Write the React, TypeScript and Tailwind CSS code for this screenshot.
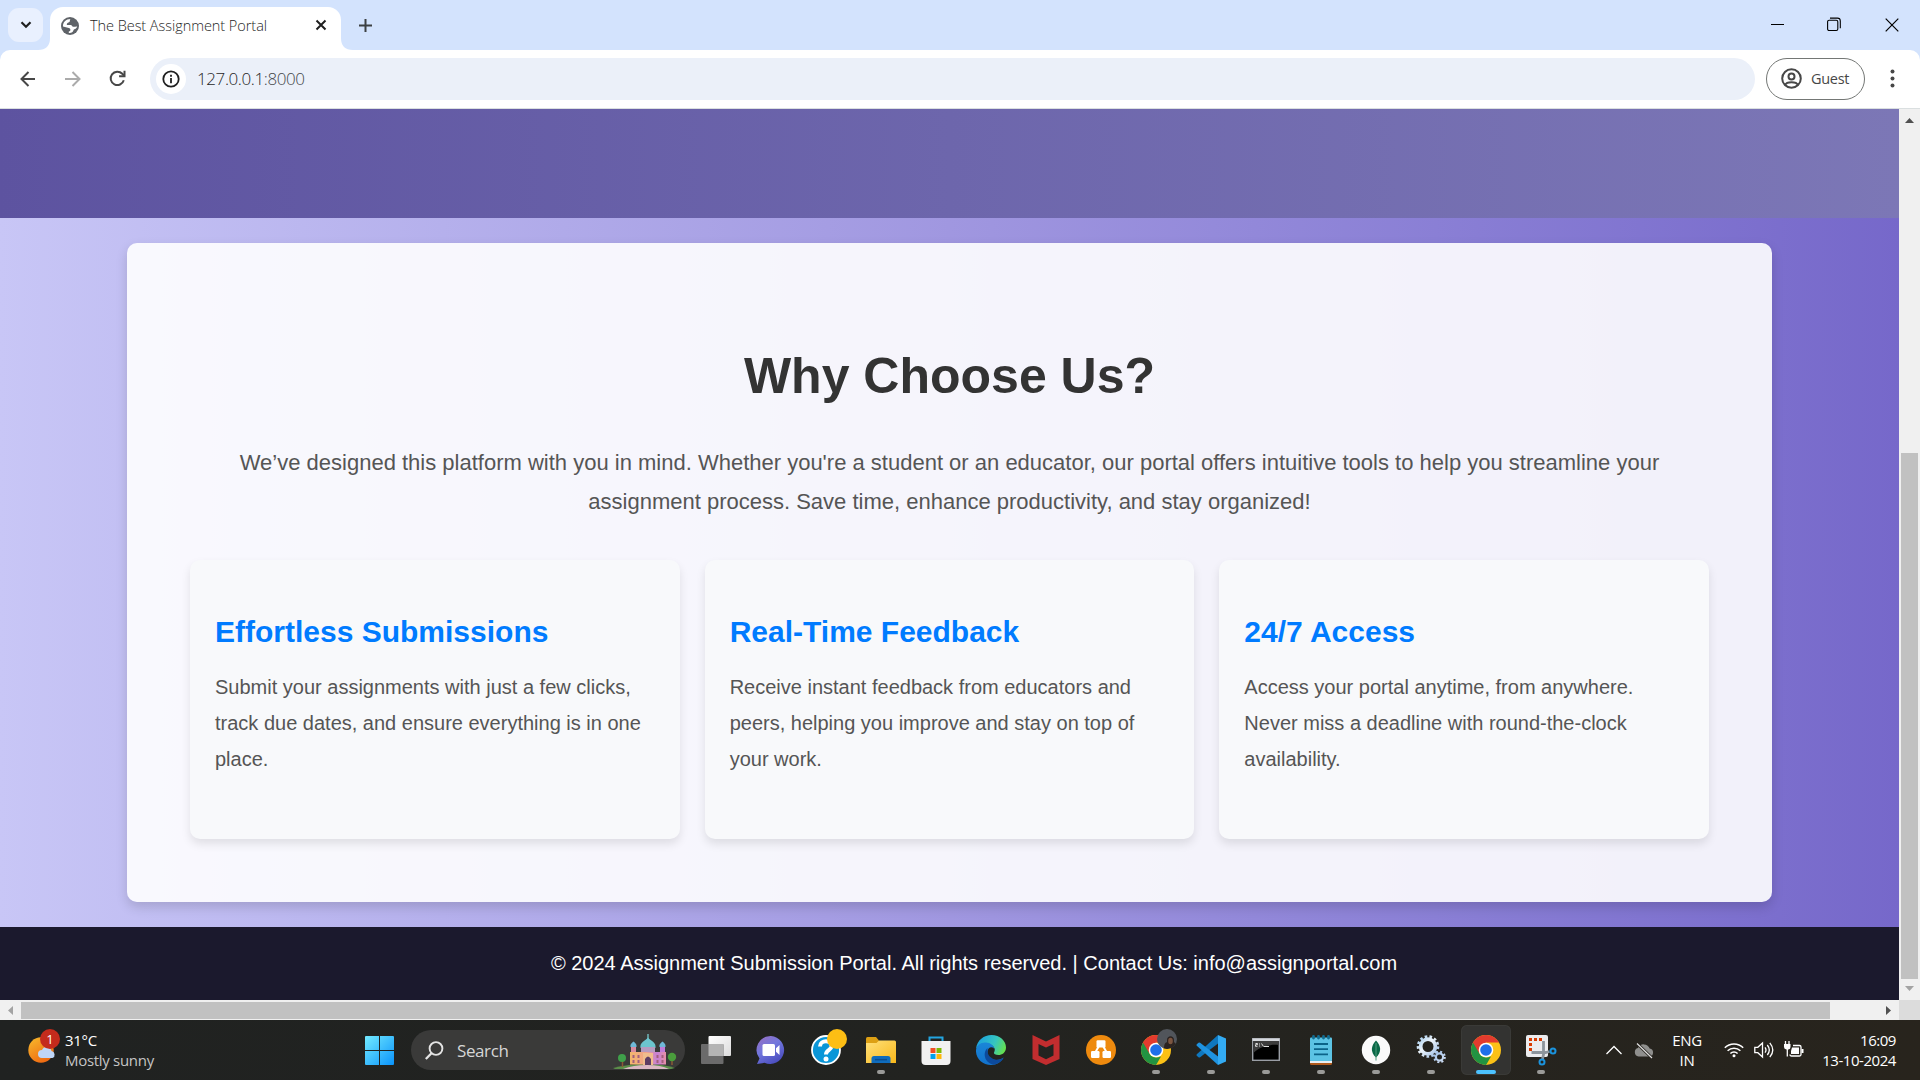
import React from "react";

const ui = "font-['Open_Sans','Noto_Sans',sans-serif]";

const features = [
  {
    title: "Effortless Submissions",
    lines: [
      "Submit your assignments with just a few clicks,",
      "track due dates, and ensure everything is in one",
      "place.",
    ],
  },
  {
    title: "Real-Time Feedback",
    lines: [
      "Receive instant feedback from educators and",
      "peers, helping you improve and stay on top of",
      "your work.",
    ],
  },
  {
    title: "24/7 Access",
    lines: [
      "Access your portal anytime, from anywhere.",
      "Never miss a deadline with round-the-clock",
      "availability.",
    ],
  },
];

function TabStrip() {
  return (
    <div className="flex h-[50px] items-end bg-[#d3e3fd]">
      <div className="mb-2 ml-2 flex h-[34px] w-[35px] items-center justify-center rounded-[11px] bg-[#e9f0fe]">
        <svg width="12" height="8" viewBox="0 0 12 8" fill="none" stroke="#1f1f1f" strokeWidth="2.2">
          <path d="M1.5 1.2 6 5.7l4.5-4.5" />
        </svg>
      </div>
      <svg className="-ml-[5px] shrink-0" width="12" height="12">
        <path d="M12 0v12H0Q12 12 12 0Z" fill="#fff" />
      </svg>
      <div className="flex h-[43px] w-[291px] items-center rounded-t-[13px] bg-white pb-[7px]">
        <svg className="mt-[1px] ml-[11px] shrink-0" width="18" height="18" viewBox="0 0 18 18">
          <circle cx="9" cy="9" r="9" fill="#5f6368" />
          <path
            d="M9.5 2C8.2 3 9.8 4.3 8 5.200 6.300 5.800 5.300 6.700 6 8h3.700c1 0 1.300 1 1.800 1.500 1 .6 3-.2 4.700 0-.4 1.500-1.500 2.500-3 2.800-.8.500-.8 1.700-1.700 2.700-1 .9-2.500 1.200-3.700 1v-1.600c1-.1 1.600-.5 1.600-1.300 0-1.300-.4-1.900-1.600-2.100L2 9.500C1.600 5.500 5 2 9.500 2Z"
            fill="#fff"
          />
        </svg>
        <span className="mt-px ml-[11px] text-[14.5px] font-light tracking-[-0.05px] whitespace-nowrap text-[#1f1f1f]">
          The Best Assignment Portal
        </span>
        <svg className="mr-[14px] ml-auto shrink-0" width="12" height="12" viewBox="0 0 12 12" stroke="#1f1f1f" strokeWidth="2">
          <path d="m1.5 1.5 9 9M10.5 1.5l-9 9" />
        </svg>
      </div>
      <svg className="shrink-0" width="12" height="12">
        <path d="M0 0v12H12Q0 12 0 0Z" fill="#fff" />
      </svg>
      <svg className="mb-[18px] ml-[6px]" width="13" height="13" viewBox="0 0 13 13" stroke="#3c4043" strokeWidth="2">
        <path d="M6.5 0v13M0 6.5h13" />
      </svg>
      <div className="mb-[18px] ml-auto flex items-center text-black">
        <svg width="13" height="15" viewBox="0 0 13 15" stroke="currentColor">
          <path d="M0 7.5h13" />
        </svg>
        <svg className="ml-[43px]" width="14" height="15" viewBox="0 0 14 15" fill="none" stroke="currentColor" strokeWidth="1.1">
          <rect x="0.6" y="3.3" width="10.2" height="10.2" rx="1.5" />
          <path d="M3 1.1h7.5a2.800 2.800 0 0 1 2.800 2.800v7.300" />
        </svg>
        <svg className="mr-[21px] ml-[44px]" width="14" height="14" viewBox="0 0 14 14" stroke="currentColor" strokeWidth="1.2">
          <path d="m.7.7 12.6 12.6M13.3.7.7 13.3" />
        </svg>
      </div>
    </div>
  );
}

function Toolbar() {
  return (
    <div className="bg-[#d3e3fd]">
      <div className="flex h-[59px] items-center rounded-t-[10px] border-b border-[#dadfe0] bg-white pb-[1px]">
        <svg className="ml-5" width="16" height="16" viewBox="0 0 16 16" fill="none" stroke="#474747" strokeWidth="2">
          <path d="M15 8H2M8.500 1 1.500 8l7 7" />
        </svg>
        <svg className="ml-[29px]" width="16" height="16" viewBox="0 0 16 16" fill="none" stroke="#ababab" strokeWidth="2">
          <path d="M0 8h14M7.500 1l7 7-7 7" />
        </svg>
        <svg className="ml-[28px]" width="17" height="17" viewBox="0 0 17 17" fill="none" stroke="#474747" strokeWidth="2">
          <path d="M14.8 10.2A6.7 6.7 0 1 1 13.3 3.8L15 5.5" />
          <path d="M15.5.8v5.400h-5.400" />
        </svg>
        <div className="ml-6 flex h-[42px] w-[1605px] items-center rounded-full bg-[#ebf0f9]">
          <div className="ml-[6px] flex h-[30px] w-[30px] items-center justify-center rounded-full bg-white">
            <svg width="18" height="18" viewBox="0 0 18 18" fill="none" stroke="#1f1f1f" strokeWidth="1.8">
              <circle cx="9" cy="9" r="7.7" />
              <path d="M9 8v5.200M9 4.700v2" />
            </svg>
          </div>
          <span className="mt-px ml-[11px] text-[17px] font-light tracking-[-0.4px] text-[#1f1f1f]">
            127.0.0.1<span className="text-[#45484c]">:8000</span>
          </span>
        </div>
        <div className="ml-[11px] flex h-[42px] w-[99px] items-center rounded-full border border-[#747775] text-[#474747]">
          <svg className="ml-[14px]" width="21" height="21" viewBox="0 0 21 21" fill="none" stroke="currentColor" strokeWidth="2">
            <circle cx="10.5" cy="10.5" r="9.3" />
            <circle cx="10.5" cy="8.5" r="3" />
            <path d="M4 17c1-2.200 4-2.800 6.500-2.800s5.500.6 6.500 2.800" />
          </svg>
          <span className="ml-[9px] text-[14.5px] tracking-[-0.3px]">Guest</span>
        </div>
        <svg className="ml-[25px]" width="5" height="19" fill="#474747">
          <circle cx="2.5" cy="2.5" r="2" />
          <circle cx="2.5" cy="9.5" r="2" />
          <circle cx="2.5" cy="16.5" r="2" />
        </svg>
      </div>
    </div>
  );
}

function PortalPage() {
  return (
    <div className="flex w-[1899px] flex-col bg-linear-to-r from-[#c8c6f6] via-[#a097e0] to-[#7668ca] font-['Liberation_Sans',Arial,sans-serif]">
      <div className="h-[109px] bg-linear-to-r from-[#5d53a0] via-[#6d66ac] to-[#7c77b6]" />
      <section className="mx-auto mt-[25px] h-[659px] w-[1645px] rounded-[10px] bg-white/90 px-[63px] pt-[101px] shadow-[0_5px_12px_rgba(0,0,0,0.15)]">
        <h2 className="text-center text-[50px] leading-[64px] font-bold text-[#333]">Why Choose Us?</h2>
        <p className="mt-[35px] text-center text-[22px] leading-[39px] text-[#555]">
          We’ve designed this platform with you in mind. Whether you're a student or an educator, our portal offers intuitive tools to help you streamline your
          <br />
          assignment process. Save time, enhance productivity, and stay organized!
        </p>
        <div className="mt-[39px] grid grid-cols-3 gap-[25px]">
          {features.map((f) => (
            <article key={f.title} className="h-[279px] rounded-[10px] bg-[#f8f9fb] px-[25px] pt-[53px] shadow-[0_5px_10px_rgba(0,0,0,0.1)]">
              <h3 className="text-[30px] leading-[38px] font-bold text-[#007bff]">{f.title}</h3>
              <p className="mt-[18px] text-[20px] leading-[36px] whitespace-nowrap text-[#555]">
                {f.lines.map((l) => (
                  <span key={l} className="block">{l}</span>
                ))}
              </p>
            </article>
          ))}
        </div>
      </section>
      <footer className="mt-[25px] h-[73px] bg-[#1b192d] pt-[18px] pl-[49px] text-center text-[20px] leading-[36px] text-white">
        © 2024 Assignment Submission Portal. All rights reserved. | Contact Us: info@assignportal.com
      </footer>
    </div>
  );
}

function VerticalScrollbar() {
  return (
    <div className="flex w-[21px] flex-col items-center bg-[#f0f0f0]">
      <svg className="mt-[9px]" width="9" height="5"><path d="M4.500 0 9 5H0Z" fill="#505050" /></svg>
      <div className="mt-[330px] h-[526px] w-[17px] bg-[#c1c1c1]" />
      <svg className="mt-[7px]" width="9" height="5"><path d="M0 0h9L4.500 5Z" fill="#a3a3a3" /></svg>
    </div>
  );
}

function HorizontalScrollbar() {
  return (
    <div className="flex h-5 bg-[#dcdcdc]">
      <div className="flex w-[1899px] items-center bg-[#f0f0f0]">
        <svg className="ml-2" width="5" height="9"><path d="M5 0v9L0 4.500Z" fill="#a3a3a3" /></svg>
        <div className="ml-2 h-[17px] w-[1809px] bg-[#c1c1c1]" />
        <svg className="ml-[56px]" width="5" height="9"><path d="M0 0v9L5 4.500Z" fill="#505050" /></svg>
      </div>
    </div>
  );
}

function ChromeLogo({ id }: { id: string }) {
  return (
    <svg width="30" height="30" viewBox="0 0 30 30">
      <defs>
        <clipPath id={id}><circle cx="15" cy="15" r="15" /></clipPath>
      </defs>
      <g clipPath={`url(#${id})`}>
        <rect width="30" height="30" fill="#fbc116" />
        <path d="M15 7.500H30V0H0v7.500L8.500 18.700Z" fill="#e33b2e" />
        <path d="M0 5.500 2 7.500 8.500 18.700c1.500 2.500 3.800 3.800 6.500 3.800h1.500l3.500-1L14.500 31H0Z" fill="#229342" />
      </g>
      <circle cx="15" cy="15" r="7.3" fill="#fff" />
      <circle cx="15" cy="15" r="5.8" fill="#1f6fe8" />
    </svg>
  );
}

function TaskViewIcon() {
  return (
    <svg width="30" height="30" viewBox="0 0 30 30">
      <defs>
        <linearGradient id="tvw" x1="0" y1="0" x2="1" y2="1"><stop stopColor="#fff" /><stop offset="1" stopColor="#dcdcdc" /></linearGradient>
      </defs>
      <rect x="7.5" y="1" width="22.5" height="20" rx="1" fill="url(#tvw)" />
      <rect x="0" y="9" width="22.5" height="20" rx="1" fill="#6b6b6b" />
      <rect x="7.5" y="9" width="15" height="12" fill="#b4b4b4" />
    </svg>
  );
}

function ChatIcon() {
  return (
    <svg width="30" height="30" viewBox="0 0 30 30">
      <defs>
        <linearGradient id="chat" x1="0" y1="0" x2="0.6" y2="1"><stop stopColor="#9a6fc0" /><stop offset="0.5" stopColor="#7277dd" /><stop offset="1" stopColor="#4c4fc0" /></linearGradient>
      </defs>
      <path d="M15 1a14 14 0 1 1-6.500 26.800L1 29l2.500-5.500A14 14 0 0 1 15 1Z" fill="url(#chat)" />
      <rect x="6.5" y="9" width="12.5" height="12" rx="1.5" fill="#fff" />
      <path d="M20 13.200 23.500 10v10L20 16.800Z" fill="#fff" />
    </svg>
  );
}

function HelpIcon() {
  return (
    <div className="relative h-[30px] w-[30px]">
      <svg width="30" height="30" viewBox="0 0 30 30">
        <circle cx="15" cy="15" r="14" fill="#0a96d8" stroke="#fff" strokeWidth="1.8" />
        <path d="M9 11.500C9 4.500 21 4.500 20.500 11.500 20 15.500 15 15 15 19.500" fill="none" stroke="#fff" strokeWidth="4" />
        <circle cx="15" cy="24" r="2.5" fill="#fff" />
      </svg>
      <span className="absolute -top-[6px] left-[16px] h-5 w-5 rounded-full bg-[#fdbe14]" />
    </div>
  );
}

function FolderIcon() {
  return (
    <svg width="30" height="30" viewBox="0 0 30 30">
      <defs>
        <linearGradient id="fold" x1="0" y1="0" x2="1" y2="1"><stop stopColor="#ffe07a" /><stop offset="1" stopColor="#f9b81a" /></linearGradient>
      </defs>
      <path d="M0 3.500Q0 2 1.500 2H10l3 3.500V10H0Z" fill="#dda014" />
      <path d="M0 8h10.500L13 5.500h15.500Q30 5.500 30 7v21H0Z" fill="url(#fold)" />
      <path d="M5.500 28v-4.500q0-2.500 2.500-2.500h14q2.500 0 2.500 2.500V28Z" fill="#0f6cbd" />
      <path d="M9 24.700h12" stroke="#0a4e91" strokeWidth="1.5" />
    </svg>
  );
}

function StoreIcon() {
  return (
    <svg width="30" height="30" viewBox="0 0 30 30">
      <path d="M8.500 7V2.500h13V7" fill="none" stroke="#23a5e0" strokeWidth="2" />
      <path d="M.5 6h29v20q0 4-4 4h-21q-4 0-4-4Z" fill="#f1f1f1" />
      <rect x="9.5" y="13" width="5" height="5" fill="#f04e23" />
      <rect x="15.5" y="13" width="5" height="5" fill="#7db904" />
      <rect x="9.5" y="19" width="5" height="5" fill="#00a2ed" />
      <rect x="15.5" y="19" width="5" height="5" fill="#fdb80a" />
    </svg>
  );
}

function EdgeIcon() {
  return (
    <svg width="30" height="30" viewBox="0 0 30 30">
      <defs>
        <linearGradient id="edge1" x1="0" y1="0.3" x2="1" y2="0.6"><stop stopColor="#1a9fe0" /><stop offset="0.6" stopColor="#36c6c0" /><stop offset="1" stopColor="#66e04e" /></linearGradient>
        <linearGradient id="edge2" x1="0" y1="0" x2="0" y2="1"><stop stopColor="#1a86d8" /><stop offset="1" stopColor="#1272cc" /></linearGradient>
      </defs>
      <path d="M0 14C1 5 8 0 15.500 0 24 0 30 6 30 12.500c0 5-4 7.500-7.500 7.500-3 0-5-1-4.500-2.500 2.500-4-1-8-7-8.500C6 8.600 1.500 10.500 0 14Z" fill="url(#edge1)" />
      <path d="M0 15c.5-5 5-8 10-7.500 4.500.3 7.800 2.800 8 6-2.500-2.500-6-1-6.500 3C11 22 15.500 25.500 20.500 25c3-.2 5-1 7-2.500C25.500 27 20.500 30 15 30 6.500 30-.5 23.500 0 15Z" fill="url(#edge2)" />
      <path d="M11.500 13c-4 3.500-3.500 10 0 13.500 2.500 2.500 6 3.500 8 2.700 4-1.200 7-3.700 8.300-6.700-2 1.500-4 2.200-7 2.200-5-.2-9-4-9.300-8.200Z" fill="#0c4a9c" />
    </svg>
  );
}

function McAfeeIcon() {
  return (
    <svg width="30" height="30" viewBox="0 0 30 30">
      <path d="M1.500 0 15 6.500 28.500 0v24L15 30 1.500 24Z M7.500 9v11.500l7.500 3.800 7.500-3.800V9L15 12.500Z" fillRule="evenodd" fill="#c22d2f" />
    </svg>
  );
}

function DrawioIcon() {
  return (
    <svg width="30" height="30" viewBox="0 0 30 30">
      <circle cx="15" cy="15" r="15" fill="#ee8a0e" />
      <path d="M13.500 10 9 18M16.500 10 21 18" stroke="#fff" strokeWidth="2" />
      <rect x="10.5" y="5.3" width="9" height="7.3" rx="1.2" fill="#fff" />
      <rect x="5" y="16" width="8.5" height="7" rx="1.2" fill="#fff" />
      <rect x="16.5" y="16" width="8.5" height="7" rx="1.2" fill="#fff" />
    </svg>
  );
}

function ChromeProfileIcon() {
  return (
    <div className="relative h-[30px] w-[30px]">
      <ChromeLogo id="chromeProfile" />
      <svg className="absolute -top-[6px] left-[16px]" width="20" height="20" viewBox="0 0 20 20">
        <defs><clipPath id="avatar"><circle cx="10" cy="10" r="10" /></clipPath></defs>
        <g clipPath="url(#avatar)">
          <rect width="20" height="20" fill="#51555b" />
          <path d="M7 20c0-5 1-6 3-7v-2c0-5 7-5 7 0v2L20 16v4Z" fill="#2b2320" />
          <ellipse cx="13.5" cy="12" rx="2.3" ry="3.2" fill="#7c5540" />
        </g>
      </svg>
    </div>
  );
}

function VsCodeIcon() {
  return (
    <svg width="30" height="30" viewBox="0 0 30 30">
      <path d="M22 0 .8 19.200q-.8.800 0 1.600l1.700 1.500q.8.600 1.600 0L22 8.500Z" fill="#0f78bf" />
      <path d="M22 30 .8 10.800q-.8-.8 0-1.600l1.700-1.500q.8-.6 1.600 0L22 21.500Z" fill="#1f93e0" />
      <path d="M22 0 30 3.500v23L22 30Z" fill="#33abf3" />
    </svg>
  );
}

function TerminalIcon() {
  return (
    <svg width="30" height="30" viewBox="0 0 30 30">
      <rect x="1.7" y="3.7" width="26.6" height="21.6" fill="#000" stroke="#9a9ea5" strokeWidth="1.4" />
      <rect x="1.5" y="3.5" width="27" height="2.5" fill="#d5d8dd" />
      <path d="M2.500 6h25v4C15 9 6 14 2.500 18Z" fill="#3c3c3c" />
      <path d="M4.500 8.500h2v1.200h-2v1.600h2M8 9h1M8 11h1M10.500 8.500l2 3M13 11.500h5" fill="none" stroke="#ddd" strokeWidth="1" />
    </svg>
  );
}

function NotepadIcon() {
  return (
    <svg width="30" height="30" viewBox="0 0 30 30">
      <path d="M4 26h22v2.500q0 1.500-1.500 1.500h-19Q4 30 4 28.500Z" fill="#b05a1c" />
      <path d="M4 25.500h22V28H4Z" fill="#e8eef2" />
      <rect x="4" y="2.5" width="22" height="23.5" rx="1" fill="#5cc3e4" />
      <path d="M8 9h14M8 14.200h14M8 19.300h14" stroke="#0b6388" strokeWidth="1.8" />
      <path d="M7.500 1.500v1.500M12.500 1.500v1.500M17.500 1.500v1.500M22.500 1.500v1.500" stroke="#126d91" strokeWidth="2.8" strokeLinecap="round" />
    </svg>
  );
}

function MongoIcon() {
  return (
    <svg width="30" height="30" viewBox="0 0 30 30">
      <circle cx="15" cy="15" r="14.2" fill="#fafafa" />
      <path d="M15 5.500c5 5 6 11.500 0 17-6-5.500-5-12 0-17Z" fill="#0a6847" />
      <path d="M15 8v17.500" stroke="#4d9d7d" />
    </svg>
  );
}

function GearsIcon() {
  return (
    <svg width="30" height="30" viewBox="0 0 30 30" fill="none">
      <defs>
        <linearGradient id="gear" x1="0" y1="0" x2="30" y2="30" gradientUnits="userSpaceOnUse"><stop stopColor="#8fc1ea" /><stop offset="0.35" stopColor="#eef5fb" /><stop offset="0.65" stopColor="#a9c6ea" /><stop offset="1" stopColor="#dfe9fa" /></linearGradient>
      </defs>
      <circle cx="12" cy="11.5" r="10" stroke="url(#gear)" strokeWidth="2.6" strokeDasharray="2.6 2.229" />
      <circle cx="12" cy="11.5" r="7.4" stroke="url(#gear)" strokeWidth="3.8" />
      <circle cx="23.5" cy="22" r="5.3" stroke="url(#gear)" strokeWidth="2" strokeDasharray="2 2.163" />
      <circle cx="23.5" cy="22" r="3.6" stroke="url(#gear)" strokeWidth="2.2" />
    </svg>
  );
}

function SnipIcon() {
  return (
    <svg className="overflow-visible" width="30" height="30" viewBox="0 0 30 30" fill="none">
      <rect x="0" y="0" width="22" height="22" rx="2" fill="#ececee" />
      <path d="M4.500 16V4.500H16" stroke="#d83b01" strokeWidth="3" strokeDasharray="3 2" />
      <path d="M17.500 6v13.500L16.500 24M5.500 17.500h14l4-1" stroke="#8d949b" strokeWidth="2.8" />
      <circle cx="27" cy="16" r="2.5" stroke="#1b93dd" strokeWidth="2" />
      <circle cx="16" cy="27" r="2.5" stroke="#1b93dd" strokeWidth="2" />
    </svg>
  );
}

const apps: { name: string; icon: React.ReactNode; state?: "open" | "active" }[] = [
  { name: "taskview", icon: <TaskViewIcon /> },
  { name: "chat", icon: <ChatIcon /> },
  { name: "help", icon: <HelpIcon /> },
  { name: "explorer", icon: <FolderIcon />, state: "open" },
  { name: "store", icon: <StoreIcon /> },
  { name: "edge", icon: <EdgeIcon /> },
  { name: "mcafee", icon: <McAfeeIcon /> },
  { name: "drawio", icon: <DrawioIcon /> },
  { name: "chrome-profile", icon: <ChromeProfileIcon />, state: "open" },
  { name: "vscode", icon: <VsCodeIcon />, state: "open" },
  { name: "terminal", icon: <TerminalIcon />, state: "open" },
  { name: "notepad", icon: <NotepadIcon />, state: "open" },
  { name: "mongodb", icon: <MongoIcon />, state: "open" },
  { name: "services", icon: <GearsIcon />, state: "open" },
  { name: "chrome", icon: <ChromeLogo id="chromeActive" />, state: "active" },
  { name: "snip", icon: <SnipIcon />, state: "open" },
];

function Monument() {
  return (
    <svg width="66" height="36" viewBox="0 0 66 36">
      <defs>
        <linearGradient id="wall" x1="0" y1="0" x2="1" y2="0"><stop stopColor="#f4b66c" /><stop offset="0.45" stopColor="#f2a489" /><stop offset="0.75" stopColor="#c47fd6" /><stop offset="1" stopColor="#e88fa6" /></linearGradient>
      </defs>
      <path d="M0 34q16-4 33-4t29 4l-4 1H2Z" fill="#5c8f4a" />
      <path d="M10 35q10-4 24-4t22 4Z" fill="#dcb8c4" />
      <path d="M35 0v5" stroke="#7fd5d8" strokeWidth="1.2" />
      <path d="M27.500 14c-1-6 5-7 7.500-10.500 2.500 3.500 8.500 4.500 7.500 10.500Z" fill="#6cc5cf" />
      <rect x="28" y="13" width="14" height="6" fill="#b69bc0" />
      <path d="M17.500 13c-.5-3 1.500-4 3-5.500 1.500 1.500 3.500 2.500 3 5.500ZM46.500 13c-.5-3 1.500-4 3-5.500 1.500 1.500 3.500 2.500 3 5.500Z" fill="#6fb9d8" />
      <rect x="18" y="13" width="5" height="6" fill="#d98ba0" />
      <rect x="47" y="13" width="5" height="6" fill="#c07bd8" />
      <rect x="17" y="18" width="36" height="12.5" fill="url(#wall)" />
      <path d="M30 31V19h10v12Z" fill="#f0bd8c" />
      <path d="M32 31v-6q3-5 6 0v6Z" fill="#5e3d63" />
      <path d="M19.500 21h2v3h-2zM24.500 21h2v3h-2zM43.500 21h2v3h-2zM48.500 21h2v3h-2zM19.500 26h2v3h-2zM24.500 26h2v3h-2zM43.500 26h2v3h-2zM48.500 26h2v3h-2z" fill="#a3607c" />
      <path d="M9.500 26v7M59 25v6" stroke="#8a5a34" strokeWidth="1.5" />
      <circle cx="9" cy="24" r="4" fill="#3fa04a" />
      <circle cx="59" cy="23" r="4.2" fill="#4a9d3c" />
    </svg>
  );
}

function Taskbar() {
  return (
    <div className={`flex h-[60px] items-center bg-linear-to-r from-[#202221] via-[#222320] to-[#28241d] ${ui}`}>
      <div className="flex w-[352px] items-center">
        <div className="relative ml-7 h-[34px] w-[32px]">
          <svg className="mt-[4px]" width="32" height="32" viewBox="0 0 32 32">
            <defs>
              <linearGradient id="sun" x1="0" y1="0" x2="0.6" y2="1"><stop stopColor="#f8bb2c" /><stop offset="1" stopColor="#ee6a12" /></linearGradient>
            </defs>
            <circle cx="13" cy="13" r="12.7" fill="url(#sun)" />
            <path d="M14 21a4 4 0 0 1 0-8 5 5 0 0 1 9.500 1 3.700 3.700 0 0 1 1 7Z" fill="#bfd6f7" />
          </svg>
          <span className="absolute -top-[4px] left-[12px] flex h-5 w-5 items-center justify-center rounded-full bg-[#c42b1c] text-[13px] leading-none text-white">
            1
          </span>
        </div>
        <div className="ml-[5px] text-[15px] leading-[20px] tracking-[-0.3px]">
          <div className="text-white">31°C</div>
          <div className="text-[#c5c5c5]">Mostly sunny</div>
        </div>
      </div>
      <div className="flex w-[55px] justify-center">
        <svg width="29" height="29" viewBox="0 0 29 29">
          <defs>
            <linearGradient id="win" x1="0" y1="0" x2="29" y2="29" gradientUnits="userSpaceOnUse"><stop stopColor="#73eaff" /><stop offset="1" stopColor="#0a93fb" /></linearGradient>
          </defs>
          <path d="M1 0h13v14H0V1q0-1 1-1ZM15 0h13q1 0 1 1v13H15ZM0 15h14v14H1q-1 0-1-1ZM15 15h14v13q0 1-1 1H15Z" fill="url(#win)" />
        </svg>
      </div>
      <div className="ml-1 flex h-10 w-[274px] items-center rounded-full bg-[#3a3a39]">
        <svg className="ml-[14px]" width="19" height="19" viewBox="0 0 19 19" fill="none" stroke="#e4e4e4" strokeWidth="1.9">
          <circle cx="11" cy="7.5" r="6.4" />
          <path d="M6.500 12.200.8 18" strokeWidth="2.3" />
        </svg>
        <span className="mt-px ml-[13px] text-[17px] tracking-[-0.4px] text-[#d6d6d6]">Search</span>
        <div className="mr-[6px] ml-auto pt-[3px]"><Monument /></div>
      </div>
      <div className="ml-[3px] flex">
        {apps.map((a) => (
          <div key={a.name} className="flex h-[60px] w-[55px] items-center justify-center">
            <div
              className={
                a.state === "active"
                  ? "flex h-[50px] w-[50px] flex-col items-center rounded-md bg-[#333331] pt-[10px] ring-1 ring-[#3a3a37] ring-inset"
                  : "flex h-[50px] w-[50px] flex-col items-center pt-[10px]"
              }
            >
              {a.icon}
              {a.state === "open" && <span className="mt-[5px] h-1 w-2 rounded-full bg-[#9a9a98]" />}
              {a.state === "active" && <span className="mt-[5px] h-1 w-5 rounded-full bg-[#4cc2ff]" />}
            </div>
          </div>
        ))}
      </div>
      <div className="ml-[38px] flex flex-1 items-center text-[15px] leading-[20px] text-white">
        <svg width="16" height="10" viewBox="0 0 16 10" fill="none" stroke="currentColor" strokeWidth="1.3">
          <path d="M.5 9 8 1.500 15.500 9" />
        </svg>
        <svg className="ml-3" width="20" height="17" viewBox="0 0 20 17">
          <path d="M4.500 14.500a4.300 4.300 0 0 1-.5-8.400 6.300 6.300 0 0 1 11.700.5 4 4 0 0 1 0 7.900Z" fill="#8f8f8d" />
          <path d="m3 1.500 15 14.500" stroke="#28251f" strokeWidth="3" />
          <path d="m3 1.500 15 14.500" stroke="#e0e0e0" strokeWidth="1.2" />
        </svg>
        <div className="ml-[16px] w-[34px] text-center tracking-[-0.3px]">
          <div>ENG</div>
          <div>IN</div>
        </div>
        <svg className="ml-[20px]" width="20" height="16" viewBox="0 0 20 16" fill="none" stroke="currentColor" strokeWidth="1.5">
          <path d="M.8 5.800a13 13 0 0 1 18.400 0M3.600 8.800a9 9 0 0 1 12.800 0M6.400 11.500a5 5 0 0 1 7.200 0" />
          <circle cx="10" cy="13.7" r="1.5" fill="currentColor" stroke="none" />
        </svg>
        <svg className="ml-[10px]" width="20" height="18" viewBox="0 0 20 18" fill="none" stroke="currentColor" strokeWidth="1.3">
          <path d="M.8 6.300v5.400h3L8.500 16V2L3.800 6.300Z" />
          <path d="M11 6.300q2 2.700 0 5.400M13.300 4q4 5 0 10M15.800 1.800q6 7.200 0 14.400" />
        </svg>
        <svg className="ml-[10px]" width="20" height="18" viewBox="0 0 20 18" fill="none" stroke="currentColor" strokeWidth="1.3">
          <path d="M9 4.500h6.500q1.500 0 1.500 1.500v7.500q0 1.500-1.500 1.500H7.500Q6 15 6 13.500" />
          <path d="M8 6.500h7v6.500h-8v-3z" fill="currentColor" stroke="none" />
          <path d="M18.500 8v4" strokeWidth="2" />
          <path d="M1.500 0v3M5 0v3" />
          <path d="M0 3h6.500v3q0 2-2 2.500h-2Q0 8 0 6Z" fill="currentColor" stroke="none" />
          <path d="M3.300 8v7.500" />
        </svg>
        <div className="mr-6 ml-auto text-right tracking-[-0.45px]">
          <div>16:09</div>
          <div>13-10-2024</div>
        </div>
      </div>
    </div>
  );
}

export default function App() {
  return (
    <div className="h-[1080px] w-[1920px] overflow-hidden bg-white">
      <div className={ui}>
        <TabStrip />
        <Toolbar />
      </div>
      <div className="flex h-[891px]">
        <PortalPage />
        <VerticalScrollbar />
      </div>
      <HorizontalScrollbar />
      <Taskbar />
    </div>
  );
}
